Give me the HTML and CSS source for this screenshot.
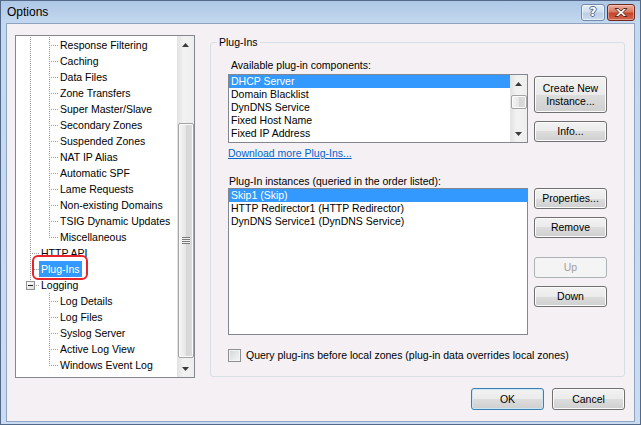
FILE: index.html
```html
<!DOCTYPE html>
<html>
<head>
<meta charset="utf-8">
<title>Options</title>
<link rel="stylesheet" href="styles.css">
</head>
<body>
<div class="window">
  <div class="titlebar">
    <span class="title">Options</span>
    <div class="caption-buttons">
      <span class="cbtn help"><span class="q">?</span></span>
      <span class="cbtn close">
        <svg width="14" height="11" viewBox="0 0 14 11"><path d="M1 1.5 L4.2 1.5 L7 4 L9.8 1.5 L13 1.5 L9 5.5 L13 9.5 L9.8 9.5 L7 7 L4.2 9.5 L1 9.5 L5 5.5 Z" fill="#fff" stroke="#5b2a20" stroke-width="1" stroke-linejoin="round"/></svg>
      </span>
    </div>
  </div>
  <div class="frame-body">
    <div class="client">
      <div class="main">
        <div class="tree">
          <div class="tree-items">
            <div class="row"><span class="g pipe"></span><span class="g tee"></span><span class="lbl">Response Filtering</span></div>
            <div class="row"><span class="g pipe"></span><span class="g tee"></span><span class="lbl">Caching</span></div>
            <div class="row"><span class="g pipe"></span><span class="g tee"></span><span class="lbl">Data Files</span></div>
            <div class="row"><span class="g pipe"></span><span class="g tee"></span><span class="lbl">Zone Transfers</span></div>
            <div class="row"><span class="g pipe"></span><span class="g tee"></span><span class="lbl">Super Master/Slave</span></div>
            <div class="row"><span class="g pipe"></span><span class="g tee"></span><span class="lbl">Secondary Zones</span></div>
            <div class="row"><span class="g pipe"></span><span class="g tee"></span><span class="lbl">Suspended Zones</span></div>
            <div class="row"><span class="g pipe"></span><span class="g tee"></span><span class="lbl">NAT IP Alias</span></div>
            <div class="row"><span class="g pipe"></span><span class="g tee"></span><span class="lbl">Automatic SPF</span></div>
            <div class="row"><span class="g pipe"></span><span class="g tee"></span><span class="lbl">Lame Requests</span></div>
            <div class="row"><span class="g pipe"></span><span class="g tee"></span><span class="lbl">Non-existing Domains</span></div>
            <div class="row"><span class="g pipe"></span><span class="g tee"></span><span class="lbl">TSIG Dynamic Updates</span></div>
            <div class="row"><span class="g pipe"></span><span class="g elbow"></span><span class="lbl">Miscellaneous</span></div>
            <div class="row"><span class="g tee"></span><span class="lbl">HTTP API</span></div>
            <div class="row"><span class="g tee"></span><span class="lbl selected">Plug-Ins<span class="annot"></span></span></div>
            <div class="row"><span class="g exp"><span class="minus"></span></span><span class="lbl">Logging</span></div>
            <div class="row"><span class="g"></span><span class="g tee"></span><span class="lbl">Log Details</span></div>
            <div class="row"><span class="g"></span><span class="g tee"></span><span class="lbl">Log Files</span></div>
            <div class="row"><span class="g"></span><span class="g tee"></span><span class="lbl">Syslog Server</span></div>
            <div class="row"><span class="g"></span><span class="g tee"></span><span class="lbl">Active Log View</span></div>
            <div class="row"><span class="g"></span><span class="g elbow"></span><span class="lbl">Windows Event Log</span></div>
          </div>
          <div class="vscroll">
            <span class="arrow"><svg width="7" height="4" viewBox="0 0 7 4"><polygon points="3.5,0 7,4 0,4" fill="#3a3a3a"/></svg></span>
            <div class="track"><div class="thumb tree-thumb"><span class="grip"></span></div></div>
            <span class="arrow"><svg width="7" height="4" viewBox="0 0 7 4"><polygon points="0,0 7,0 3.5,4" fill="#3a3a3a"/></svg></span>
          </div>
        </div>

        <div class="group">
          <span class="group-title">Plug-Ins</span>
          <div class="label label1">Available plug-in components:</div>
          <div class="pair">
            <div class="listbox list1">
              <div class="items">
                <div class="item sel">DHCP Server</div>
                <div class="item">Domain Blacklist</div>
                <div class="item">DynDNS Service</div>
                <div class="item">Fixed Host Name</div>
                <div class="item">Fixed IP Address</div>
              </div>
              <div class="vscroll">
                <span class="arrow"><svg width="7" height="4" viewBox="0 0 7 4"><polygon points="3.5,0 7,4 0,4" fill="#3a3a3a"/></svg></span>
                <div class="track"><div class="thumb list-thumb"></div></div>
                <span class="arrow"><svg width="7" height="4" viewBox="0 0 7 4"><polygon points="0,0 7,0 3.5,4" fill="#3a3a3a"/></svg></span>
              </div>
            </div>
            <div class="btncol btncol1">
              <button class="btn tall">Create New<br>Instance...</button>
              <button class="btn">Info...</button>
            </div>
          </div>
          <a class="link" href="#">Download more Plug-Ins...</a>
          <div class="label label2">Plug-In instances (queried in the order listed):</div>
          <div class="pair">
            <div class="listbox list2">
              <div class="items">
                <div class="item sel">Skip1 (Skip)</div>
                <div class="item">HTTP Redirector1 (HTTP Redirector)</div>
                <div class="item">DynDNS Service1 (DynDNS Service)</div>
              </div>
            </div>
            <div class="btncol btncol2">
              <button class="btn">Properties...</button>
              <button class="btn">Remove</button>
              <button class="btn disabled up">Up</button>
              <button class="btn">Down</button>
            </div>
          </div>
          <label class="check"><span class="box"></span>Query plug-ins before local zones (plug-in data overrides local zones)</label>
        </div>
      </div>
      <div class="footer">
        <button class="btn default wide">OK</button>
        <button class="btn wide">Cancel</button>
      </div>
    </div>
  </div>
</div>
</body>
</html>
```

FILE: styles.css
```css
* { box-sizing: border-box; }
html, body { margin: 0; padding: 0; }
body {
  font-family: "Liberation Sans", Arial, sans-serif;
  font-size: 10.5px;
  color: #000;
  background: #f4f0f4;
}
.window {
  width: 641px;
  height: 425px;
  border: 1px solid #52698a;
  background: linear-gradient(#adc7e6 0px, #c4d8ef 22px, #cadcf1 100%);
  display: flex;
  flex-direction: column;
}
.titlebar {
  height: 22px;
  display: flex;
  align-items: flex-start;
  justify-content: space-between;
  padding: 0 5px 0 6px;
  flex: none;
}
.title {
  font-size: 12px;
  line-height: 22px;
  color: #000;
}
.caption-buttons {
  display: flex;
  gap: 2px;
  padding-top: 3px;
}
.cbtn {
  height: 17px;
  border-radius: 3px;
  display: flex;
  align-items: center;
  justify-content: center;
}
.help {
  width: 24px;
  border: 1px solid #7189aa;
  background: linear-gradient(#e4eef9 0%, #d0dff0 45%, #bccfe6 55%, #cbdcef 100%);
  box-shadow: inset 0 0 0 1px rgba(255,255,255,0.55);
}
.help .q {
  font-family: "DejaVu Sans", sans-serif;
  font-weight: bold;
  font-size: 12px;
  line-height: 15px;
  color: #fff;
  text-shadow: -1px 0 #566a84, 1px 0 #566a84, 0 -1px #566a84, 0 1px #566a84;
}
.close {
  width: 28px;
  border: 1px solid #6e2a1e;
  background: linear-gradient(#eab0a2 0%, #d9785f 45%, #c5442a 55%, #d4694e 100%);
  box-shadow: inset 0 0 0 1px rgba(255,220,210,0.45);
}
.close svg { display: block; }

.frame-body {
  flex: 1;
  padding: 0 5px 2px 5px;
  display: flex;
}
.client {
  flex: 1;
  border: 1px solid #8ea4c0;
  background: #f4f0f4;
  display: flex;
  flex-direction: column;
}
.main {
  display: flex;
  gap: 15px;
  padding: 11px 9px 0 8px;
  align-items: flex-start;
}

/* Tree */
.tree {
  width: 180px;
  height: 343px;
  flex: none;
  border: 1px solid #828790;
  background: #fff;
  display: flex;
}
.tree-items {
  flex: 1;
  overflow: hidden;
  padding: 1px 0 0 5px;
  --v: repeating-linear-gradient(to bottom, #a0a0a0 0 1px, transparent 1px 2px);
  --h: repeating-linear-gradient(to right, #a0a0a0 0 1px, transparent 1px 2px);
}
.row {
  display: flex;
  height: 16px;
  align-items: center;
}
.g {
  width: 19px;
  height: 16px;
  flex: none;
}
.pipe { background: var(--v) 9px 0 / 1px 16px no-repeat; }
.tee {
  background: var(--v) 9px 0 / 1px 16px no-repeat,
              var(--h) 11px 8px / 8px 1px no-repeat;
}
.elbow {
  background: var(--v) 9px 0 / 1px 9px no-repeat,
              var(--h) 11px 8px / 8px 1px no-repeat;
}
.exp {
  display: flex;
  align-items: flex-start;
  background: var(--v) 9px 0 / 1px 4px no-repeat,
              var(--h) 15px 8px / 4px 1px no-repeat;
}
.minus {
  width: 9px;
  height: 9px;
  margin: 4px 0 0 5px;
  border: 1px solid #919191;
  background: linear-gradient(#1e1e1e, #1e1e1e) 1px 3px / 5px 1px no-repeat,
              linear-gradient(135deg, #ffffff, #dcdcdc);
}
.lbl {
  margin-left: -1px;
  padding: 0 2px;
  line-height: 16px;
  height: 16px;
  white-space: nowrap;
}
.lbl.selected {
  background: #3399ff;
  color: #fff;
  position: relative;
}
.annot {
  position: absolute;
  left: -7px;
  top: -6px;
  width: 56px;
  height: 25px;
  border: 2.5px solid #e5242b;
  border-radius: 6px;
}

/* Scrollbars */
.vscroll {
  width: 17px;
  flex: none;
  display: flex;
  flex-direction: column;
  background: linear-gradient(to right, #e2e2e2, #f2f2f2 40%, #eeeeee);
}
.arrow {
  height: 17px;
  flex: none;
  display: flex;
  align-items: center;
  justify-content: center;
}
.arrow svg { display: block; }
.track {
  flex: 1;
  display: flex;
  flex-direction: column;
  align-items: center;
}
.thumb {
  width: 16px;
  border: 1px solid #a3a3a3;
  border-radius: 2px;
  background: linear-gradient(to right, #f5f5f5, #e6e6e6 50%, #d6d6d6 51%, #dcdcdc);
  box-shadow: inset 0 0 0 1px #fbfbfb;
  display: flex;
  align-items: center;
  justify-content: center;
}
.tree-thumb {
  margin-top: 70px;
  height: 235px;
}
.grip {
  width: 8px;
  height: 7px;
  background: repeating-linear-gradient(to bottom, #7a7a7a 0 1px, #f0f0f0 1px 2px);
}
.list-thumb {
  margin-top: 3px;
  height: 14px;
}

/* Group box */
.group {
  flex: 1;
  margin-top: 7px;
  border: 1px solid #d5dfe5;
  border-radius: 3px;
  padding: 16px 17px 14px 17px;
  position: relative;
  display: flex;
  flex-direction: column;
  align-items: flex-start;
}
.group-title {
  position: absolute;
  top: -7px;
  left: 6px;
  padding: 0 2px;
  line-height: 13px;
  background: #f4f0f4;
}
.label {
  line-height: 13px;
  white-space: nowrap;
}
.label1 { margin-left: 3px; margin-bottom: 2px; }
.label2 { margin-left: 1px; margin-top: 15px; }
.pair {
  display: flex;
  gap: 6px;
  align-items: flex-start;
}
.listbox {
  width: 300px;
  border: 1px solid #828790;
  background: #fff;
  display: flex;
}
.list1 { height: 69px; }
.list2 { height: 147px; }
.items {
  flex: 1;
  overflow: hidden;
}
.item {
  height: 13px;
  line-height: 13px;
  padding-left: 2px;
  white-space: nowrap;
}
.item.sel {
  background: #3399ff;
  color: #fff;
}
.link {
  margin-top: 4px;
  line-height: 13px;
  color: #0066cc;
  text-decoration: underline;
}
.btncol {
  width: 73px;
  display: flex;
  flex-direction: column;
  gap: 8px;
}
.btncol1 { margin-top: 2px; }
.btncol2 .up { margin-top: 11px; }

.btn {
  width: 73px;
  height: 21px;
  padding: 0;
  margin: 0;
  font-family: inherit;
  font-size: 10.5px;
  line-height: 13px;
  color: #000;
  border: 1px solid #707070;
  border-radius: 3px;
  background: linear-gradient(#f2f2f2 0%, #ebebeb 50%, #dddddd 50%, #cfcfcf 100%);
  box-shadow: inset 0 0 0 1px #fbfbfb;
  text-align: center;
}
.btn.tall { height: 37px; }
.btn.disabled {
  border-color: #adb2b5;
  background: #f4f4f4;
  box-shadow: none;
  color: #a0a0a0;
}
.btn.wide { height: 22px; }
.btn.default {
  border-color: #3c7fb1;
  box-shadow: inset 0 0 0 1px #c9e6f7;
}

.check {
  margin-top: 14px;
  display: flex;
  align-items: center;
  gap: 5px;
  line-height: 13px;
  white-space: nowrap;
}
.box {
  width: 13px;
  height: 13px;
  flex: none;
  border: 1px solid #8e8f8f;
  background: linear-gradient(135deg, #d2d4d7, #f7f7f7);
  box-shadow: inset 0 0 0 1px #f3f3f3;
}

.footer {
  display: flex;
  justify-content: flex-end;
  gap: 8px;
  padding: 10px 9px 0 0;
}
```
